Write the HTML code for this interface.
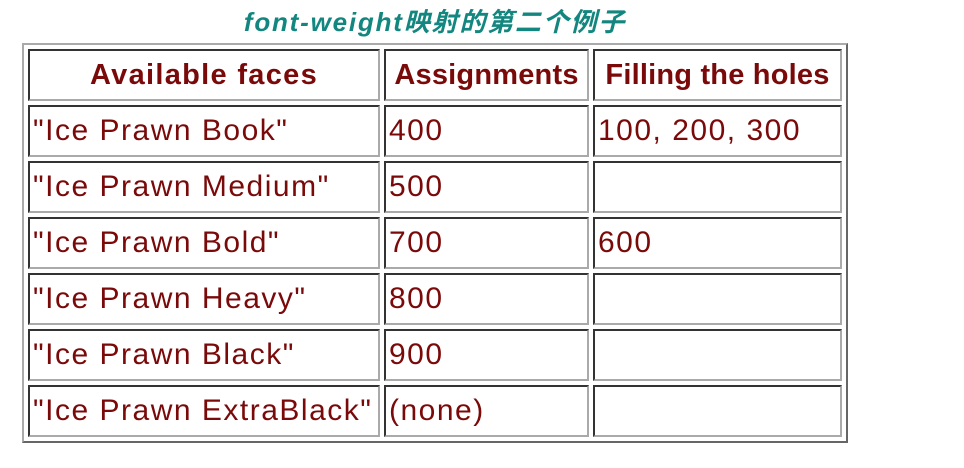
<!DOCTYPE html>
<html><head><style>
body{margin:0;background:#fff;font-family:"Liberation Sans","Noto Sans CJK SC",sans-serif;}
.cap{position:absolute;top:6px;left:0;width:870px;text-align:center;color:#13867f;font-weight:bold;font-style:italic;font-size:26px;letter-spacing:1.8px;line-height:32px;}
table{position:absolute;left:22px;top:43px;border-collapse:separate;border-spacing:4px;border:2px solid;border-color:#aaa #666 #666 #aaa;}
td,th{border:2px solid;border-color:#333 #aaa #aaa #333;padding:0 3px;color:#7a0a0a;font-size:30px;letter-spacing:1.5px;text-align:left;box-sizing:border-box;height:52px;white-space:nowrap;}
th{text-align:center;font-weight:bold;font-size:29px;letter-spacing:1.3px;}
</style></head><body>
<div class="cap">font-weight映射的第二个例子</div>
<table>
<tr><th style="width:352px">Available faces</th><th style="width:205px;padding:0 1px;letter-spacing:0.2px">Assignments</th><th style="width:249px;padding:0 1px;letter-spacing:0.2px">Filling the holes</th></tr>
<tr><td>"Ice Prawn Book"</td><td>400</td><td>100, 200, 300</td></tr>
<tr><td>"Ice Prawn Medium"</td><td>500</td><td></td></tr>
<tr><td>"Ice Prawn Bold"</td><td>700</td><td>600</td></tr>
<tr><td>"Ice Prawn Heavy"</td><td>800</td><td></td></tr>
<tr><td>"Ice Prawn Black"</td><td>900</td><td></td></tr>
<tr><td>"Ice Prawn ExtraBlack"</td><td>(none)</td><td></td></tr>
</table>
</body></html>
